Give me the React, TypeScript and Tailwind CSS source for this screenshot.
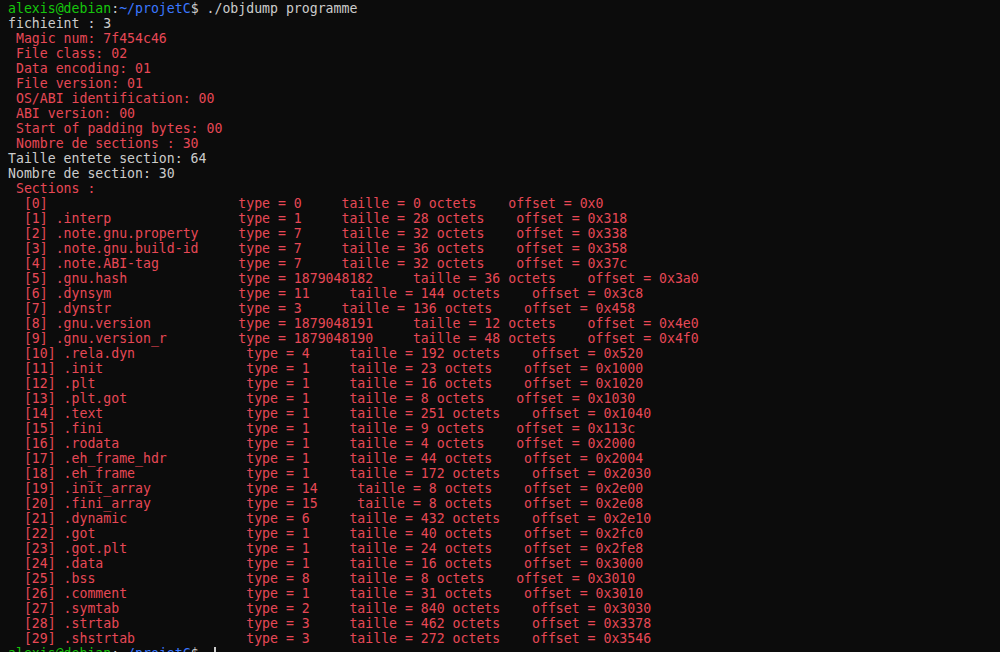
import React from "react";

const sections: [string, number, number, string][] = [
  ["", 0, 0, "0"],
  [".interp", 1, 28, "318"],
  [".note.gnu.property", 7, 32, "338"],
  [".note.gnu.build-id", 7, 36, "358"],
  [".note.ABI-tag", 7, 32, "37c"],
  [".gnu.hash", 1879048182, 36, "3a0"],
  [".dynsym", 11, 144, "3c8"],
  [".dynstr", 3, 136, "458"],
  [".gnu.version", 1879048191, 12, "4e0"],
  [".gnu.version_r", 1879048190, 48, "4f0"],
  [".rela.dyn", 4, 192, "520"],
  [".init", 1, 23, "1000"],
  [".plt", 1, 16, "1020"],
  [".plt.got", 1, 8, "1030"],
  [".text", 1, 251, "1040"],
  [".fini", 1, 9, "113c"],
  [".rodata", 1, 4, "2000"],
  [".eh_frame_hdr", 1, 44, "2004"],
  [".eh_frame", 1, 172, "2030"],
  [".init_array", 14, 8, "2e00"],
  [".fini_array", 15, 8, "2e08"],
  [".dynamic", 6, 432, "2e10"],
  [".got", 1, 40, "2fc0"],
  [".got.plt", 1, 24, "2fe8"],
  [".data", 1, 16, "3000"],
  [".bss", 8, 8, "3010"],
  [".comment", 1, 31, "3010"],
  [".symtab", 2, 840, "3030"],
  [".strtab", 3, 462, "3378"],
  [".shstrtab", 3, 272, "3546"],
];

const red = [
  " Magic num: 7f454c46",
  " File class: 02",
  " Data encoding: 01",
  " File version: 01",
  " OS/ABI identification: 00",
  " ABI version: 00",
  " Start of padding bytes: 00",
  " Nombre de sections : 30",
];

function Prompt({ children }: { children?: React.ReactNode }) {
  return (
    <div>
      <span className="text-[#16c60c]">alexis@debian</span>
      <span className="text-[#cccccc]">:</span>
      <span className="text-[#3b78ff]">~/projetC</span>
      <span className="text-[#cccccc]">$ </span>
      {children}
    </div>
  );
}

export default function App() {
  return (
    <div className="w-[1000px] h-[652px] overflow-hidden bg-[#0c0c0c]">
      <div className="pl-2 pt-[1px] font-['DejaVu_Sans_Mono',monospace] text-[13.2px] leading-[15px] whitespace-pre text-[#cccccc]">
        <Prompt>
          <span className="text-[#cccccc]">./objdump programme</span>
        </Prompt>
        <div>fichieint : 3</div>
        {red.map((l, i) => (
          <div key={i} className="text-[#e74856]">
            {l}
          </div>
        ))}
        <div>Taille entete section: 64</div>
        <div>Nombre de section: 30</div>
        <div className="text-[#e74856]"> Sections :</div>
        {sections.map(([name, type, size, off], i) => (
          <div key={i} className="text-[#e74856]">
            {`  [${i}] ${name.padEnd(23)}type = ${type}     taille = ${size} octets    offset = 0x${off}`}
          </div>
        ))}
        <Prompt>
          <span className="inline-block ml-[7px] w-[2px] h-[14px] bg-[#cccccc] align-middle" />
        </Prompt>
      </div>
    </div>
  );
}
